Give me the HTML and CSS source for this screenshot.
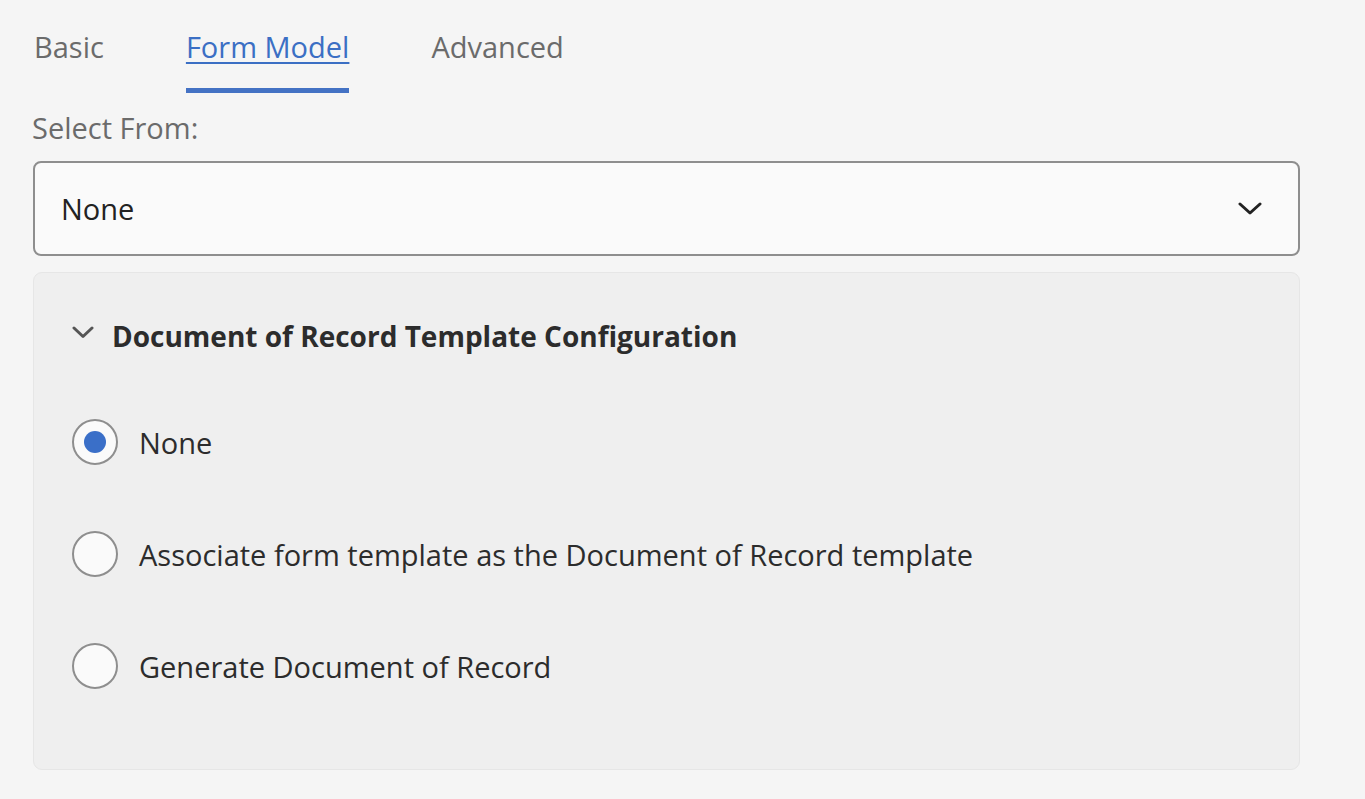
FILE: index.html
```html
<!DOCTYPE html>
<html>
<head>
<meta charset="utf-8">
<link rel="stylesheet" href="styles.css">
</head>
<body>
<div class="page">
  <div class="tabs">
    <div class="tab">Basic</div>
    <div class="tab active"><span class="tab-label">Form Model</span></div>
    <div class="tab">Advanced</div>
  </div>
  <div class="field-label">Select From:</div>
  <div class="select">
    <span class="select-value">None</span>
    <svg class="select-chevron" width="24" height="14" viewBox="0 0 24 14"><path d="M2 2 L12 11 L22 2" fill="none" stroke="#222" stroke-width="3" stroke-linecap="round" stroke-linejoin="round"/></svg>
  </div>
  <div class="panel">
    <div class="panel-header">
      <svg class="panel-chevron" width="22" height="13" viewBox="0 0 22 13"><path d="M2 2 L11 10.5 L20 2" fill="none" stroke="#555" stroke-width="3" stroke-linecap="round" stroke-linejoin="round"/></svg>
      <span class="panel-title">Document of Record Template Configuration</span>
    </div>
    <div class="radios">
      <div class="radio-row">
        <span class="radio checked"><span class="dot"></span></span>
        <span class="radio-label">None</span>
      </div>
      <div class="radio-row">
        <span class="radio"></span>
        <span class="radio-label">Associate form template as the Document of Record template</span>
      </div>
      <div class="radio-row">
        <span class="radio"></span>
        <span class="radio-label">Generate Document of Record</span>
      </div>
    </div>
  </div>
</div>
</body>
</html>
```
FILE: styles.css
```css
html, body {
  margin: 0;
  padding: 0;
  background: #f5f5f5;
}
body {
  font-family: "Open Sans", "Noto Sans", sans-serif;
  color: #2c2c2c;
  width: 1365px;
  height: 799px;
  overflow: hidden;
}
.page {
  padding: 0 65px 0 33px;
}
.tabs {
  display: flex;
  gap: 82px;
  padding-left: 1px;
  padding-top: 24px;
}
.tab {
  font-size: 29px;
  line-height: 46px;
  color: #6b6b6b;
  padding-bottom: 18px;
  border-bottom: 5px solid transparent;
}
.tab.active {
  color: #3b6fc4;
  border-bottom-color: #4472c4;
}
.tab-label {
  text-decoration: underline;
  text-decoration-thickness: 2px;
  text-underline-offset: 4px;
}
.field-label {
  font-size: 29px;
  line-height: 36px;
  color: #6b6b6b;
  margin-top: 17px;
  margin-left: -1px;
}
.select {
  margin-top: 15px;
  height: 91px;
  border: 2px solid #8e8e8e;
  border-radius: 8px;
  background: #fafafa;
  display: flex;
  align-items: center;
  justify-content: space-between;
  padding: 0 36px 0 26px;
}
.select-value {
  font-size: 29px;
  color: #222;
}
.select-chevron {
  display: block;
}
.panel {
  margin-top: 16px;
  height: 498px;
  background: #efefef;
  border: 1px solid #e6e6e6;
  border-radius: 9px;
  padding: 0 0 0 38px;
  box-sizing: border-box;
}
.panel-header {
  display: flex;
  align-items: center;
  gap: 18px;
  margin-top: 41px;
  height: 44px;
}
.panel-chevron {
  display: block;
  margin-top: -8px;
}
.panel-title {
  font-size: 28px;
  font-weight: 700;
  color: #2c2c2c;
}
.radios {
  display: flex;
  flex-direction: column;
  gap: 66px;
  margin-top: 61px;
}
.radio-row {
  display: flex;
  align-items: center;
  gap: 21px;
  height: 46px;
}
.radio {
  width: 46px;
  height: 46px;
  box-sizing: border-box;
  border: 2px solid #8e8e8e;
  border-radius: 50%;
  background: #fafafa;
  display: flex;
  align-items: center;
  justify-content: center;
  flex: none;
}
.dot {
  width: 22px;
  height: 22px;
  border-radius: 50%;
  background: #3a6fc8;
}
.radio-label {
  font-size: 29px;
  color: #2c2c2c;
}
```
